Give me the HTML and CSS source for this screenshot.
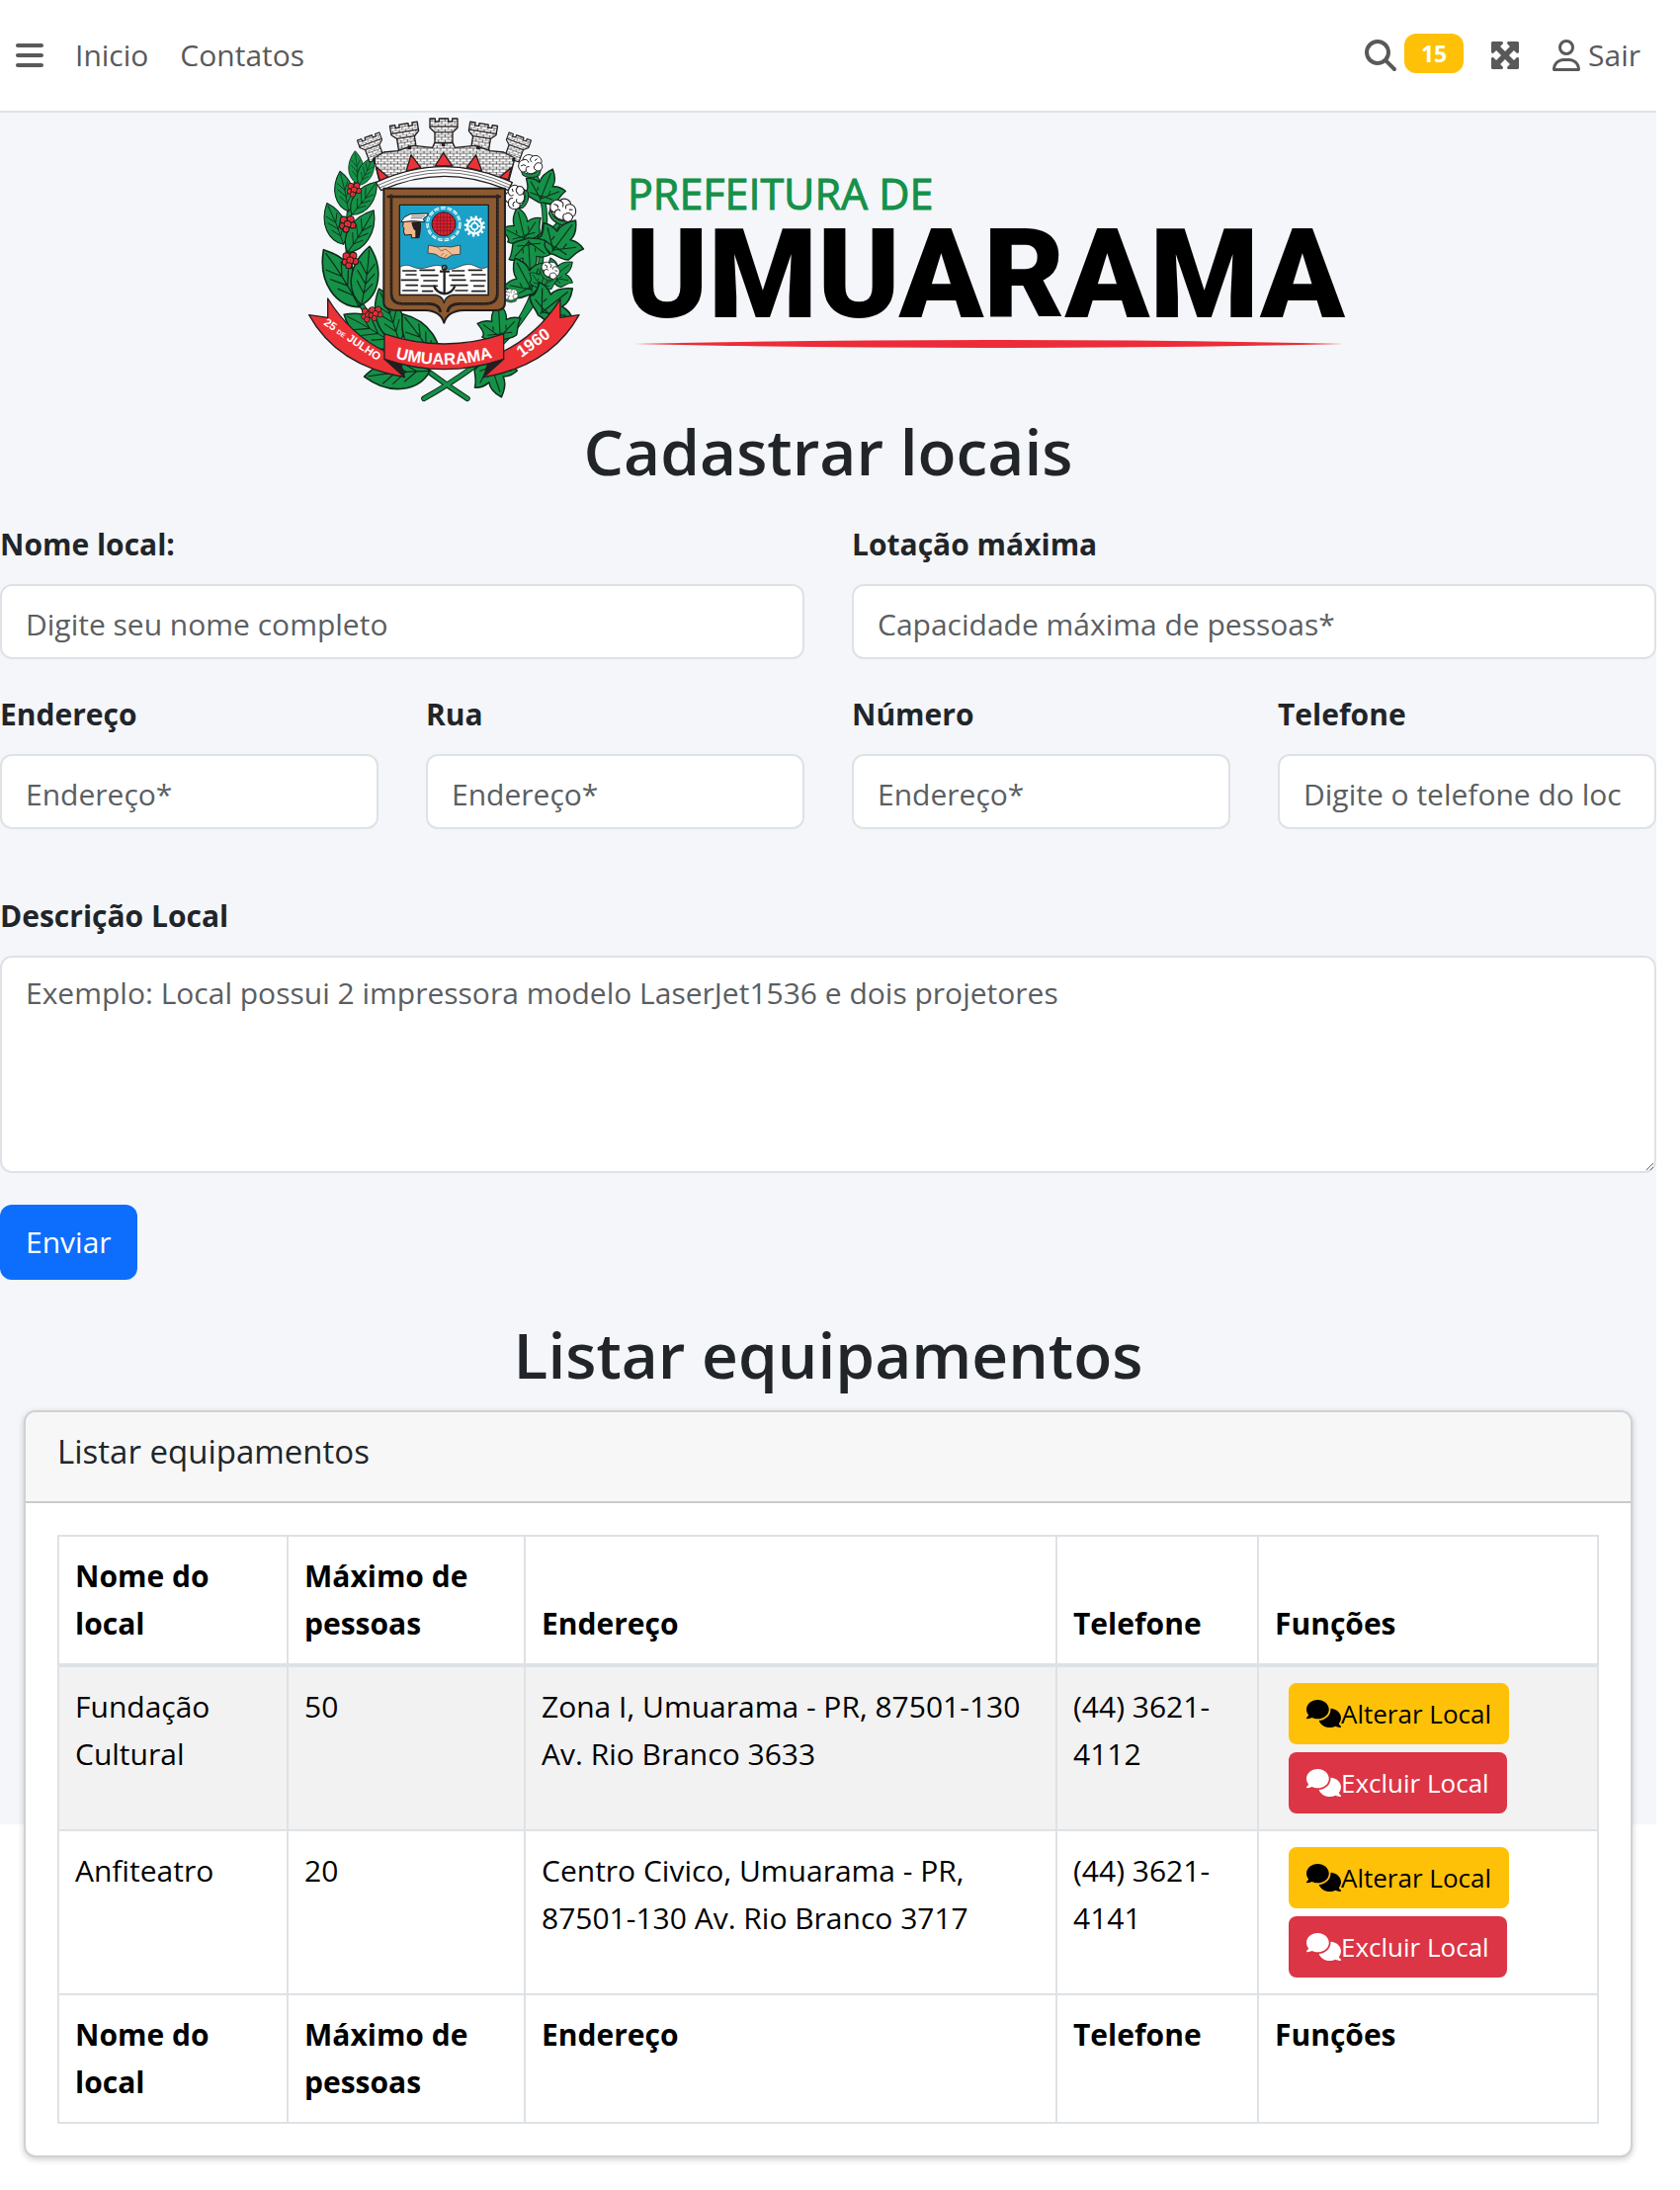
FILE: index.html
```html
<!DOCTYPE html>
<html lang="pt-BR">
<head>
<meta charset="utf-8">
<meta name="viewport" content="width=device-width, initial-scale=1">
<title>Cadastrar locais</title>
<link rel="stylesheet" href="styles.css">
</head>
<body>
<svg class="sprite" aria-hidden="true">
  <symbol id="i-comments" viewBox="0 0 640 512"><path d="M208 352c114.900 0 208-78.800 208-176S322.900 0 208 0S0 78.800 0 176c0 38.600 14.700 74.300 39.600 103.400c-3.500 9.400-8.700 17.700-14.200 24.700c-4.800 6.200-9.700 11-13.300 14.300c-1.800 1.600-3.300 2.900-4.300 3.700c-.5 .4-.9 .7-1.100 .8l-.2 .2C1 327.200-1.400 334.400 .8 340.900S9.100 352 16 352c21.800 0 43.800-5.600 62.100-12.500c9.200-3.500 17.800-7.400 25.200-11.400C134.100 343.300 169.800 352 208 352zM448 176c0 112.300-99.100 196.900-216.500 207C255.800 457.400 336.400 512 432 512c38.200 0 73.900-8.700 104.700-23.900c7.500 4 16 7.900 25.200 11.400c18.300 6.900 40.300 12.500 62.100 12.500c6.900 0 13.100-4.500 15.200-11.100c2.100-6.600-.2-13.800-5.800-17.900l-.2-.2c-.2-.2-.6-.4-1.100-.8c-1-.8-2.500-2-4.300-3.700c-3.600-3.300-8.500-8.100-13.300-14.300c-5.500-7-10.700-15.400-14.200-24.700c24.900-29 39.600-64.700 39.600-103.400c0-92.800-84.900-168.900-192.600-175.500c.4 5.100 .6 10.300 .6 15.500z"/></symbol>
  <symbol id="leaf" viewBox="-30 -102 60 104" overflow="visible">
    <path d="M0 0C-28 -18 -34 -62 0 -100C30 -66 28 -20 0 0Z" fill="#159148" stroke="#0d2b1a" stroke-width="2.500"/>
    <path d="M0 0Q4 -50 0 -94M1 -20L-13 -40M1 -20L14 -38M2 -36L-15 -58M2 -36L15 -55M2 -52L-13 -73M2 -52L13 -72" fill="none" stroke="#0d2b1a" stroke-width="1.800"/>
  </symbol>
</svg>

<div class="page">
  <header class="navbar">
    <nav class="nav-group">
      <button class="nav-icon" type="button" aria-label="Menu">
        <svg width="28" height="32" viewBox="0 0 448 512"><path d="M0 96C0 78 14 64 32 64H416c18 0 32 14 32 32s-14 32-32 32H32C14 128 0 114 0 96zM0 256c0-18 14-32 32-32H416c18 0 32 14 32 32s-14 32-32 32H32c-18 0-32-14-32-32zM448 416c0 18-14 32-32 32H32c-18 0-32-14-32-32s14-32 32-32H416c18 0 32 14 32 32z"/></svg>
      </button>
      <a class="nav-link" href="#">Inicio</a>
      <a class="nav-link" href="#">Contatos</a>
    </nav>
    <div class="nav-group nav-tools">
      <a class="nav-search" href="#" aria-label="Pesquisar">
        <svg width="32" height="32" viewBox="0 0 512 512"><path d="M416 208c0 45.900-14.900 88.300-40 122.700L502.600 457.400c12.500 12.500 12.500 32.800 0 45.300s-32.800 12.500-45.300 0L330.700 376c-34.400 25.200-76.800 40-122.700 40C93.100 416 0 322.900 0 208S93.100 0 208 0S416 93.100 416 208zM208 352a144 144 0 1 0 0-288 144 144 0 1 0 0 288z"/></svg>
        <span class="badge">15</span>
      </a>
      <button class="nav-icon" type="button" aria-label="Tela cheia">
        <svg width="28" height="32" viewBox="32 0 448 512"><path d="M200 32H56C42.700 32 32 42.700 32 56V200c0 9.700 5.800 18.500 14.800 22.200s19.300 1.700 26.200-5.200l40-40 79 79-79 79L73 295c-6.900-6.900-17.200-8.900-26.200-5.200S32 302.300 32 312V456c0 13.300 10.700 24 24 24H200c9.700 0 18.500-5.800 22.200-14.800s1.700-19.300-5.200-26.200l-40-40 79-79 79 79-40 40c-6.900 6.900-8.900 17.200-5.200 26.200s12.500 14.800 22.200 14.800H456c13.300 0 24-10.700 24-24V312c0-9.700-5.800-18.500-14.800-22.200s-19.300-1.700-26.200 5.200l-40 40-79-79 79-79 40 40c6.900 6.900 17.200 8.900 26.200 5.200s14.800-12.500 14.800-22.200V56c0-13.300-10.700-24-24-24H312c-9.700 0-18.500 5.800-22.200 14.800s-1.700 19.300 5.200 26.200l40 40-79 79-79-79 40-40c6.900-6.900 8.900-17.200 5.200-26.200S209.700 32 200 32z"/></svg>
      </button>
      <a class="nav-exit" href="#">
        <svg width="28" height="32" viewBox="0 0 448 512"><path d="M304 128a80 80 0 1 0 -160 0 80 80 0 1 0 160 0zM96 128a128 128 0 1 1 256 0A128 128 0 1 1 96 128zM49.300 464H398.700c-8.900-63.300-63.300-112-129-112H178.300c-65.700 0-120.100 48.700-129 112zM0 482.300C0 383.800 79.800 304 178.300 304h91.400C368.200 304 448 383.800 448 482.300c0 16.400-13.300 29.700-29.700 29.700H29.700C13.300 512 0 498.700 0 482.300z"/></svg>
        <span>Sair</span>
      </a>
    </div>
  </header>

  <main class="content">
    <svg class="logo" viewBox="0 0 1052 288" role="img" aria-label="Prefeitura de Umuarama">
      <defs>
        <pattern id="brick" width="20" height="16" patternUnits="userSpaceOnUse">
          <rect width="20" height="16" fill="#fff"/>
          <path d="M0 0H20M0 8H20M4 0V8M14 8V16" stroke="#231f20" stroke-width="2"/>
        </pattern>
        <g id="tower">
          <path d="M-42 0h16v9h12v-9h28v9h12v-9h16v28l-15 14v46h-54v-46l-15 -14z" fill="url(#brick)" stroke="#231f20" stroke-width="4"/>
          <path d="M-42 24H42M-27 42H27" stroke="#231f20" stroke-width="3"/>
        </g>
        <g id="lobed">
          <path d="M0 48C-16 42 -40 46 -52 32C-40 24 -54 4 -62 -8C-44 -16 -30 -14 -20 -10C-22 -30 -10 -48 4 -62C18 -46 26 -28 22 -12C36 -18 50 -18 64 -12C52 4 52 24 48 34C32 46 14 40 0 48Z" fill="#159148" stroke="#0d2b1a" stroke-width="4"/>
          <path d="M0 42L3 -48M0 36L-46 -4M0 36L46 -5M0 28L-36 28M2 26L36 26M-18 16L-18 4M19 16L20 2" fill="none" stroke="#0d2b1a" stroke-width="3"/>
        </g>
        <g id="cotton" fill="#fff" stroke="#231f20" stroke-width="3">
          <path d="M-30 16Q0 44 32 12L26 32Q0 46 -24 32Z" fill="#159148"/>
          <path d="M-28 20C-44 8 -36 -12 -24 -14C-22 -32 0 -34 6 -26C24 -34 38 -14 32 -4C42 10 28 22 18 18C8 32 -12 28 -14 18C-20 24 -26 22 -28 20Z"/>
          <path d="M-24 -14Q-10 -20 -6 -6M6 -26Q-8 -16 4 -8M32 -4Q16 -10 12 4M-14 18Q-16 4 -4 6M18 18Q8 14 10 4M-30 4Q-20 -4 -14 4M20 -18L12 -12" fill="none"/>
        </g>
        <g id="berries" fill="#ed3237" stroke="#231f20" stroke-width="3">
          <circle cx="-10" cy="-9" r="9"/><circle cx="8" cy="-10" r="9"/><circle cx="-13" cy="7" r="8"/><circle cx="14" cy="5" r="8"/><circle cx="0" cy="2" r="9"/><circle cx="-4" cy="16" r="8"/>
          <path d="M-10 -9h1M8 -10h1M-13 7h1M14 5h1M0 2h1M-4 16h1" stroke-width="5"/>
        </g>
        <path id="rib-mid" d="M270 750Q445 804 620 748"/>
      </defs>

      <g transform="scale(.3333) translate(-33 -27)" stroke-linejoin="round">
        <g fill="none" stroke="#0d2b1a" stroke-width="17" stroke-linecap="round">
          <path d="M180 220Q120 400 190 590Q270 720 516 880M720 200Q770 320 740 400Q750 540 650 680Q560 780 384 880M650 680Q710 600 776 500M735 390Q800 360 800 330"/>
        </g>
        <g fill="none" stroke="#159148" stroke-width="11" stroke-linecap="round">
          <path d="M180 220Q120 400 190 590Q270 720 516 880M720 200Q770 320 740 400Q750 540 650 680Q560 780 384 880M650 680Q710 600 776 500M735 390Q800 360 800 330"/>
        </g>

        <g>
          <use href="#leaf" x="-30" y="-102" width="60" height="104" transform="translate(182 228) rotate(-4)"/>
          <use href="#leaf" x="-30" y="-102" width="60" height="104" transform="translate(188 232) rotate(26) scale(.95)"/>
          <use href="#leaf" x="-30" y="-102" width="60" height="104" transform="translate(155 312) rotate(-12) scale(1.250)"/>
          <use href="#leaf" x="-30" y="-102" width="60" height="104" transform="translate(165 322) rotate(37) scale(1.250)"/>
          <use href="#leaf" x="-30" y="-102" width="60" height="104" transform="translate(140 412) rotate(-22) scale(1.350)"/>
          <use href="#leaf" x="-30" y="-102" width="60" height="104" transform="translate(152 436) rotate(32) scale(1.500)"/>
          <use href="#leaf" x="-30" y="-102" width="60" height="104" transform="translate(188 602) rotate(-32) scale(2.050)"/>
          <use href="#leaf" x="-30" y="-102" width="60" height="104" transform="translate(194 596) rotate(8) scale(1.800)"/>
          <use href="#leaf" x="-30" y="-102" width="60" height="104" transform="translate(300 720) rotate(-59) scale(1.850)"/>
          <use href="#leaf" x="-30" y="-102" width="60" height="104" transform="translate(310 710) rotate(-21) scale(1.750)"/>
          <use href="#leaf" x="-30" y="-102" width="60" height="104" transform="translate(425 775) rotate(-35) scale(1.850)"/>
          <use href="#leaf" x="-30" y="-102" width="60" height="104" transform="translate(402 796) rotate(-95) scale(2)"/>
        </g>
        <use href="#berries" transform="translate(172 244)"/>
        <use href="#berries" transform="translate(152 348) scale(1.150)"/>
        <use href="#berries" transform="translate(160 458) scale(1.150)"/>
        <use href="#berries" transform="translate(215 624)"/>
        <use href="#berries" transform="translate(237 620)"/>

        <use href="#lobed" transform="translate(750 240) rotate(20)"/>
        <use href="#lobed" transform="translate(680 360) rotate(-15)"/>
        <use href="#lobed" transform="translate(800 395) rotate(35) scale(1.150)"/>
        <use href="#lobed" transform="translate(705 440) rotate(175)"/>
        <use href="#lobed" transform="translate(795 495) rotate(50) scale(.8)"/>
        <use href="#lobed" transform="translate(690 515) rotate(-30) scale(1.100)"/>
        <use href="#lobed" transform="translate(745 515) rotate(15) scale(.7)"/>
        <use href="#lobed" transform="translate(775 590) rotate(50) scale(1.200)"/>
        <use href="#lobed" transform="translate(612 655) rotate(-5) scale(1.050)"/>
        <use href="#lobed" transform="translate(600 810) rotate(160) scale(1.100)"/>
        <use href="#cotton" transform="translate(708 170)"/>
        <use href="#cotton" transform="translate(662 268) rotate(-70)"/>
        <use href="#cotton" transform="translate(806 308) rotate(40) scale(1.100)"/>
        <use href="#cotton" transform="translate(768 490) rotate(50) scale(.8)"/>
        <use href="#cotton" transform="translate(648 565) scale(.6)"/>

        <!-- mural crown -->
        <use href="#tower" transform="translate(215 84) rotate(-20) scale(.85)"/>
        <use href="#tower" transform="translate(676 84) rotate(20) scale(.85)"/>
        <use href="#tower" transform="translate(322 46) rotate(-9)"/>
        <use href="#tower" transform="translate(566 46) rotate(9)"/>
        <use href="#tower" transform="translate(444 30)"/>
        <path d="M232 150L262 132L304 128L352 112L410 118L416 104H472L478 118L538 112L586 128L626 132L660 150L640 225Q445 150 250 225Z" fill="url(#brick)" stroke="#231f20" stroke-width="4"/>
        <path d="M335 112h10v12h-10zM438 102h10v12h-10zM544 112h10v12h-10zM228 150h9v10h-9zM652 150h9v10h-9z" fill="#231f20"/>
        <path d="M238 176L276 208L250 218ZM345 140L374 178L330 190ZM443 134L470 174L418 174ZM542 140L560 190L514 178ZM650 178L640 216L614 208Z" fill="#ed3237" stroke="#231f20" stroke-width="4"/>
        <path d="M238 224Q445 128 652 224L640 248Q445 162 254 248Z" fill="#fff" stroke="#231f20" stroke-width="4"/>
        <path d="M245 232Q445 138 646 232M250 240Q445 148 643 240" fill="none" stroke="#231f20" stroke-width="2"/>

        <!-- shield -->
        <path d="M262 242H630V588Q630 612 604 612H505Q455 614 445 650Q435 614 388 612H302Q262 612 262 588Z" fill="#8c5a30" stroke="#231f20" stroke-width="6"/>
        <path d="M272 267H618M285 260V560Q285 592 320 592H396Q432 592 434 618M607 260V560Q607 592 570 592H494Q458 592 456 618" fill="none" stroke="#231f20" stroke-width="8"/>
        <path d="M272 267H618M285 260V560Q285 592 320 592H396M607 260V560Q607 592 570 592H494" fill="none" stroke="#5b3a1e" stroke-width="2" stroke-dasharray="6 5"/>
        <path d="M310 292H580V566H470Q450 570 445 590Q440 570 420 566H310Z" fill="#1ba1c8" stroke="#231f20" stroke-width="4"/>
        <path d="M312 480Q330 470 350 480T400 480T445 482T490 480T540 478T578 480V564H470Q450 568 445 584Q440 568 420 564H312Z" fill="#fff" stroke="#231f20" stroke-width="2"/>
        <path d="M320 492h40M372 490h44M470 492h36M520 490h40M330 504h30M376 506h50M462 506h44M530 504h40M316 520h50M384 522h40M470 520h40M526 522h44M330 536h34M376 538h48M466 536h50M536 538h30M320 552h44M380 554h30M480 552h36M530 554h40" stroke="#231f20" stroke-width="5" stroke-linecap="round"/>
        <path d="M446 484V560M432 494H462M414 536Q420 558 446 562Q470 560 478 538" fill="none" stroke="#231f20" stroke-width="7"/>
        <circle cx="446" cy="482" r="7" fill="none" stroke="#231f20" stroke-width="4"/>
        <circle cx="444" cy="350" r="49" fill="none" stroke="#fff" stroke-width="8" stroke-dasharray="15 5"/>
        <circle cx="444" cy="350" r="49" fill="none" stroke="#1ba1c8" stroke-width="2"/>
        <circle cx="444" cy="350" r="36" fill="#dc2332" stroke="#231f20" stroke-width="3"/>
        <path d="M410 340H478M408 350H480M410 360H478M416 330H472M416 370H472M424 322V378M434 316V384M444 314V386M454 316V384M464 322V378" stroke="#7a1320" stroke-width="2"/>
        <circle cx="538" cy="357" r="28" fill="none" stroke="#fff" stroke-width="8" stroke-dasharray="7 7.660"/>
        <circle cx="538" cy="357" r="22" fill="none" stroke="#fff" stroke-width="7"/>
        <circle cx="538" cy="357" r="10" fill="none" stroke="#fff" stroke-width="5"/>
        <path d="M520 357H528M548 357H556M538 339V347M538 367V375" stroke="#fff" stroke-width="4"/>
        <path d="M322 342L320 358L324 364L322 372L326 384L346 382V392H368V340Z" fill="#efb78c" stroke="#231f20" stroke-width="3"/>
        <path d="M346 344Q350 366 358 370V392H370Q378 362 374 342Z" fill="#231f20"/>
        <path d="M314 344Q322 326 342 320L398 318Q392 330 382 334L386 344Q350 338 314 344Z" fill="#fff" stroke="#231f20" stroke-width="3"/>
        <path d="M346 326H388M344 332H380" stroke="#231f20" stroke-width="2"/>
        <path d="M398 414L425 420L444 418L466 420L494 414V442L470 444L450 456L432 450L420 442L396 438Z" fill="#f1bd93" stroke="#231f20" stroke-width="2"/>
        <path d="M425 420L436 432L450 426L470 444M436 446L444 438M446 452L454 442" fill="none" stroke="#7b4a2b" stroke-width="2"/>

        <!-- ribbon -->
        <path d="M35 626L92 634V576Q160 686 268 738L325 815Q120 780 35 626Z" fill="#ed3237" stroke="#231f20" stroke-width="4"/>
        <path d="M855 626L798 634V578Q730 686 622 738L565 815Q770 780 855 626Z" fill="#ed3237" stroke="#231f20" stroke-width="4"/>
        <path d="M264 760L325 815L314 774ZM626 760L565 815L578 774Z" fill="#231f20" stroke="#231f20" stroke-width="4"/>
        <path d="M264 684Q445 744 626 684V760Q445 822 264 760Z" fill="#ed3237" stroke="#231f20" stroke-width="4"/>
        <g class="ribbon-text">
          <text font-size="34" transform="translate(78 654) rotate(34)">25 <tspan font-size="20">DE</tspan> JULHO</text>
          <text font-size="50" text-anchor="middle"><textPath href="#rib-mid" startOffset="50%">UMUARAMA</textPath></text>
          <text font-size="50" transform="translate(680 756) rotate(-36)">1960</text>
        </g>
      </g>

      <text class="logo-small" x="323" y="93">PREFEITURA DE</text>
      <text class="logo-big" x="321" y="202">UMUARAMA</text>
      <path d="M330 229Q500 225 688 225T1047 229Q880 233 688 233T330 229Z" fill="#ed2c39"/>
    </svg>

    <h1 class="title">Cadastrar locais</h1>

    <form class="form">
      <div class="row row-2">
        <div class="field"><label for="nome">Nome local:</label><input id="nome" type="text" placeholder="Digite seu nome completo"></div>
        <div class="field"><label for="lotacao">Lotação máxima</label><input id="lotacao" type="text" placeholder="Capacidade máxima de pessoas*"></div>
      </div>
      <div class="row row-4">
        <div class="field"><label for="endereco">Endereço</label><input id="endereco" type="text" placeholder="Endereço*"></div>
        <div class="field"><label for="rua">Rua</label><input id="rua" type="text" placeholder="Endereço*"></div>
        <div class="field"><label for="numero">Número</label><input id="numero" type="text" placeholder="Endereço*"></div>
        <div class="field"><label for="telefone">Telefone</label><input id="telefone" type="text" placeholder="Digite o telefone do loc"></div>
      </div>
      <div class="field field-desc">
        <label for="descricao">Descrição Local</label>
        <textarea id="descricao" placeholder="Exemplo: Local possui 2 impressora modelo LaserJet1536 e dois projetores"></textarea>
      </div>
      <button class="btn btn-primary" type="submit">Enviar</button>
    </form>

    <h2 class="title title-list">Listar equipamentos</h2>

    <section class="card">
      <h3 class="card-header">Listar equipamentos</h3>
      <div class="card-body">
        <table class="table">
          <colgroup><col class="c-nome"><col class="c-max"><col><col class="c-tel"><col class="c-fun"></colgroup>
          <thead>
            <tr><th scope="col">Nome do local</th><th scope="col">Máximo de pessoas</th><th scope="col">Endereço</th><th scope="col">Telefone</th><th scope="col">Funções</th></tr>
          </thead>
          <tbody>
            <tr>
              <td>Fundação Cultural</td><td>50</td><td>Zona I, Umuarama - PR, 87501-130 Av. Rio Branco 3633</td><td>(44) 3621-4112</td>
              <td><div class="actions">
                <button class="btn btn-sm btn-warning" type="button"><svg width="35" height="28"><use href="#i-comments"/></svg>Alterar Local</button>
                <button class="btn btn-sm btn-danger" type="button"><svg width="35" height="28"><use href="#i-comments"/></svg>Excluir Local</button>
              </div></td>
            </tr>
            <tr>
              <td>Anfiteatro</td><td>20</td><td>Centro Civico, Umuarama - PR, 87501-130 Av. Rio Branco 3717</td><td>(44) 3621-4141</td>
              <td><div class="actions">
                <button class="btn btn-sm btn-warning" type="button"><svg width="35" height="28"><use href="#i-comments"/></svg>Alterar Local</button>
                <button class="btn btn-sm btn-danger" type="button"><svg width="35" height="28"><use href="#i-comments"/></svg>Excluir Local</button>
              </div></td>
            </tr>
          </tbody>
          <tfoot>
            <tr><th scope="col">Nome do local</th><th scope="col">Máximo de pessoas</th><th scope="col">Endereço</th><th scope="col">Telefone</th><th scope="col">Funções</th></tr>
          </tfoot>
        </table>
      </div>
    </section>
  </main>
</div>
</body>
</html>
```
FILE: styles.css
```css
* { box-sizing: border-box; }

body {
  margin: 0;
  background: #fff;
  color: #212529;
  font-family: "Open Sans", "Noto Sans", sans-serif;
  font-size: 30px;
  line-height: 48px;
}

button, input, textarea { font: inherit; }
svg { fill: currentColor; }
.sprite { position: absolute; width: 0; height: 0; }

.page { margin-right: 24px; }

/* top bar */
.navbar {
  display: flex;
  justify-content: space-between;
  align-items: center;
  height: 114px;
  padding: 0 16px;
  border-bottom: 2px solid #dee2e6;
  background: #fff;
  color: #595959;
}
.nav-group { display: flex; align-items: center; gap: 32px; }
.nav-group svg { display: block; flex: none; }
.nav-tools { gap: 28px; }
.nav-icon { padding: 0; border: 0; background: none; color: inherit; }
.nav-link, .nav-search, .nav-exit { color: inherit; text-decoration: none; }
.nav-search, .nav-exit { display: flex; align-items: center; gap: 8px; }
.nav-exit { margin-left: 6px; }
.badge {
  width: 60px;
  margin-bottom: 4px;
  border-radius: 12px;
  background: #ffc107;
  color: #fff;
  font-size: 23px;
  font-weight: 700;
  line-height: 40px;
  text-align: center;
}

/* the grey backdrop covers the first screen only */
.content {
  padding: 5px 0 32px;
  background: linear-gradient(#f4f6f9, #f4f6f9) 0 0 / 100% 1732px no-repeat;
}

.logo {
  display: block;
  width: 1052px;
  max-width: 100%;
  margin: 0 auto;
}
.logo-small { fill: #159148; stroke: #159148; stroke-width: 1px; font-size: 43px; }
.logo-big { fill: #000; font-family: Roboto, sans-serif; font-size: 126px; font-weight: 900; }
.ribbon-text { fill: #fff; font-family: "Liberation Sans", sans-serif; font-weight: 700; }

.title {
  margin: 10px 0 30px;
  font-size: 64px;
  font-weight: 600;
  line-height: 80px;
  text-align: center;
}

/* form */
.row { display: grid; gap: 48px; margin-bottom: 32px; }
.row-2 { grid-template-columns: repeat(2, 1fr); }
.row-4 { grid-template-columns: repeat(4, 1fr); margin-bottom: 64px; }
.field { display: flex; flex-direction: column; gap: 16px; min-width: 0; }
.field label { font-weight: 700; }
.field input, .field textarea {
  width: 100%;
  border: 2px solid #dee2e6;
  border-radius: 12px;
  background: #fff;
  color: #212529;
}
.field input { height: 76px; padding: 4px 24px 0; }
.field textarea { display: block; height: 220px; padding: 12px 24px; resize: vertical; }
.field ::placeholder { color: #5a5e62; opacity: 1; }
.field-desc { margin-bottom: 32px; }

.btn {
  padding: 12px 24px;
  border: 2px solid transparent;
  border-radius: 12px;
}
.btn-primary { background: #0d6efd; color: #fff; }
.btn-sm {
  display: flex;
  align-items: center;
  padding: 8px 16px;
  border-radius: 8px;
  font-size: 26px;
  line-height: 42px;
}
.btn-warning { background: #ffc107; color: #000; }
.btn-danger { background: #dc3545; color: #fff; }

.title-list { margin: 36px 0 16px; }

/* list card */
.card {
  margin: 0 24px;
  border: 2px solid #cfd1d2;
  border-radius: 12px;
  background: #fff;
  box-shadow: 0 2px 6px rgba(0, 0, 0, .2);
}
.card-header {
  margin: 0;
  padding: 16px 32px 26px;
  border-bottom: 2px solid #c8cacb;
  border-radius: 10px 10px 0 0;
  background: #f7f7f7;
  font-size: 33px;
  font-weight: 400;
  line-height: 48px;
}
.card-body { padding: 32px; }

.table {
  width: 100%;
  border-collapse: collapse;
  table-layout: fixed;
  color: #000;
}
.table th, .table td {
  padding: 16px;
  border: 2px solid #dee2e6;
  text-align: left;
  vertical-align: top;
}
.table thead th { border-bottom-width: 4px; vertical-align: bottom; }
.table tbody tr:nth-child(odd) { background: #f2f2f2; }
.c-nome { width: 232px; }
.c-max { width: 240px; }
.c-tel { width: 204px; }
.c-fun { width: 344px; }
.actions {
  display: flex;
  flex-direction: column;
  align-items: flex-start;
  gap: 8px;
  padding-left: 14px;
}
```
